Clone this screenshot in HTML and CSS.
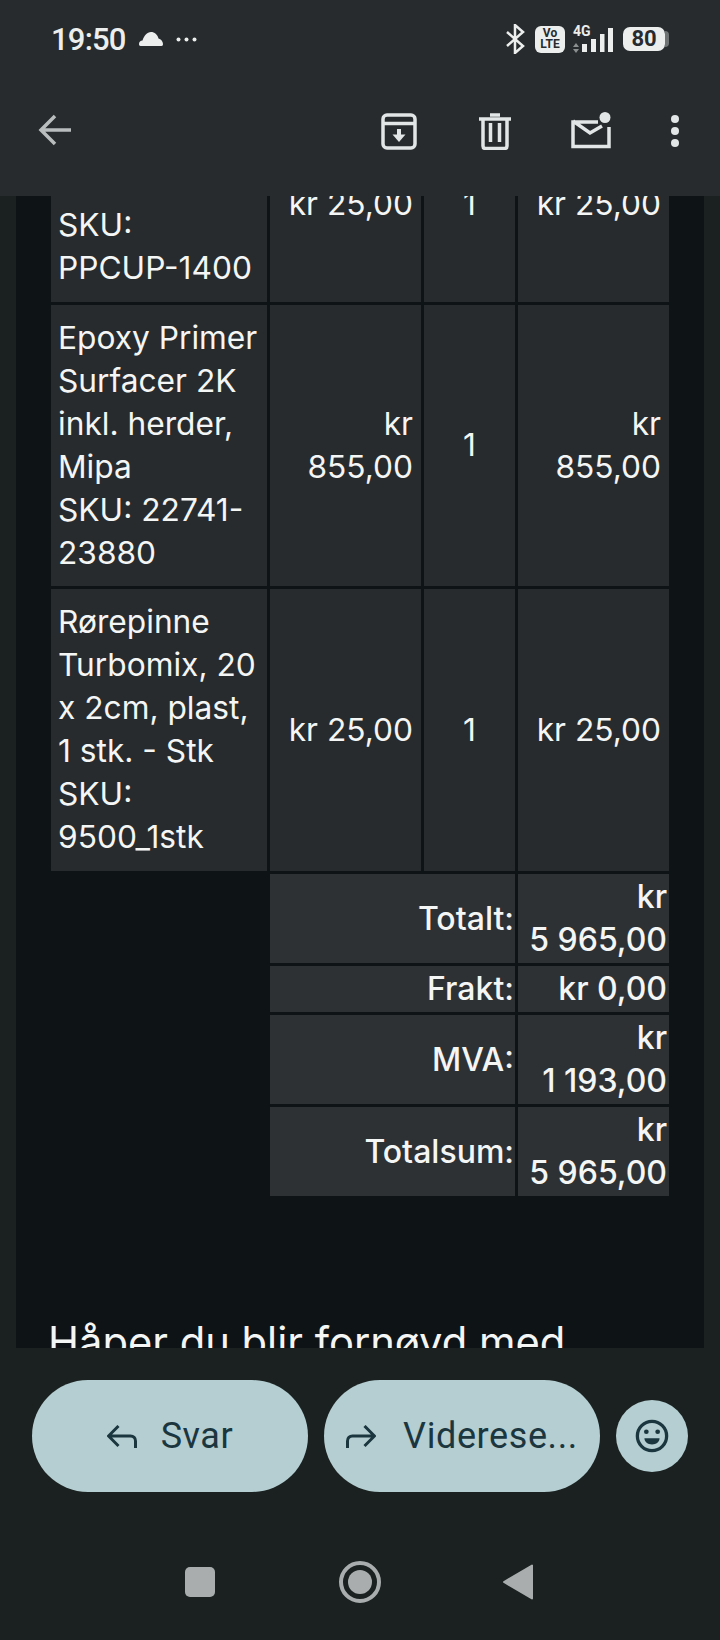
FILE: index.html
```html
<!DOCTYPE html>
<html lang="no">
<head>
    <meta charset="UTF-8">
    <meta name="viewport" content="width=device-width, initial-scale=1.0">
    <title>E-post</title>
    <link rel="stylesheet" href="styles.css">
</head>
<body>
    <div class="top">
        <div class="status-bar">
            <div class="status-left">
                <span class="clock">19:50</span>
                <svg class="cloud" viewBox="0 0 24 14"><path d="M1.500 14C.5 14 0 13 0 12c0-2 1.500-3.500 3.500-3.500C5 4 8 0 12 0c3.500 0 6.500 2.500 7.500 6.500 2.500.5 4.500 3 4.500 5.500 0 1-.5 2-1.500 2z" fill="#eceeee"/></svg>
                <svg class="dots" viewBox="0 0 21 5"><circle cx="2.500" cy="2.500" r="2" fill="#eceeee"/><circle cx="10.500" cy="2.500" r="2" fill="#eceeee"/><circle cx="18.500" cy="2.500" r="2" fill="#eceeee"/></svg>
            </div>
            <div class="status-right">
                <svg class="bluetooth" viewBox="0 0 20 30"><path d="M2 8l16 14-8 7V1l8 7L2 22" fill="none" stroke="#eceeee" stroke-width="2.500"/></svg>
                <span class="volte">Vo<br>LTE</span>
                <span class="signal">
                    <span class="net">4G</span>
                    <svg viewBox="0 0 40 27"><path d="M0 21l3-4 3 4zM0 23l3 4 3-4z" fill="#8b8f90"/><path d="M9 18h5v8H9zM18 13h5v13h-5zM27 8h4.500v18H27zM35 2h5v24h-5z" fill="#eceeee"/></svg>
                </span>
                <span class="battery"><span class="battery-level">80</span><span class="battery-tip"></span></span>
            </div>
        </div>
        <div class="toolbar">
            <svg class="icon-back" viewBox="0 0 34 32"><path d="M33 16H4M17 2L3 16l14 14" fill="none" stroke="#b9bdbe" stroke-width="3.500"/></svg>
            <div class="toolbar-actions">
                <svg class="icon-archive" viewBox="0 0 36 37"><rect x="2" y="2" width="32" height="33" rx="4" fill="none" stroke="#e3e6e6" stroke-width="3.500"/><path d="M2 10.500h32" stroke="#e3e6e6" stroke-width="3.500"/><path d="M18 16v7" stroke="#e3e6e6" stroke-width="4"/><path d="M11.500 21.500h13L18 29z" fill="#e3e6e6"/></svg>
                <svg class="icon-trash" viewBox="0 0 32 37"><path d="M0 6h32M11 2h10" fill="none" stroke="#e3e6e6" stroke-width="3.500"/><path d="M4 7v26c0 1.500 1 2.500 2.500 2.500h19c1.500 0 2.500-1 2.500-2.500V7M11.500 10v19M20.500 10v19" fill="none" stroke="#e3e6e6" stroke-width="3.500"/></svg>
                <svg class="icon-mail" viewBox="0 0 40 38"><path d="M27 10H2v24.500h36V15M2 9l17 12 12-7" fill="none" stroke="#e3e6e6" stroke-width="3.500"/><circle cx="34" cy="5.500" r="5.500" fill="#e3e6e6"/></svg>
                <svg class="icon-more" viewBox="0 0 10 32"><circle cx="5" cy="4" r="4" fill="#e3e6e6"/><circle cx="5" cy="16" r="4" fill="#e3e6e6"/><circle cx="5" cy="28" r="4" fill="#e3e6e6"/></svg>
            </div>
        </div>
    </div>

    <div class="message-view">
        <div class="message">
            <table class="order-table">
                <tbody>
                    <tr>
                        <td class="product">Målebeger<br>PP 1400 ml<br>SKU: <span class="sku">PPCUP-1400</span></td>
                        <td class="price">kr 25,00</td>
                        <td class="qty">1</td>
                        <td class="price">kr 25,00</td>
                    </tr>
                    <tr>
                        <td class="product">Epoxy Primer Surfacer 2K inkl. herder, Mipa<br>SKU: 22741-23880</td>
                        <td class="price">kr 855,00</td>
                        <td class="qty">1</td>
                        <td class="price">kr 855,00</td>
                    </tr>
                    <tr>
                        <td class="product">Rørepinne Turbomix, 20 x 2cm, plast, 1 stk. - Stk<br>SKU: 9500_1stk</td>
                        <td class="price">kr 25,00</td>
                        <td class="qty">1</td>
                        <td class="price">kr 25,00</td>
                    </tr>
                </tbody>
                <tfoot>
                    <tr>
                        <td class="blank"></td>
                        <th colspan="2">Totalt:</th>
                        <td class="sum">kr 5&nbsp;965,00</td>
                    </tr>
                    <tr>
                        <td class="blank"></td>
                        <th colspan="2">Frakt:</th>
                        <td class="sum">kr 0,00</td>
                    </tr>
                    <tr>
                        <td class="blank"></td>
                        <th colspan="2">MVA:</th>
                        <td class="sum">kr 1&nbsp;193,00</td>
                    </tr>
                    <tr>
                        <td class="blank"></td>
                        <th colspan="2">Totalsum:</th>
                        <td class="sum">kr 5&nbsp;965,00</td>
                    </tr>
                </tfoot>
            </table>
            <p class="closing">Håper du blir fornøyd med</p>
        </div>
    </div>

    <div class="bottom">
        <div class="actions">
            <button class="pill">
                <svg class="pill-icon" viewBox="0 0 30 23"><path d="M28.500 23v-7c0-3-2-5-5-5H2.500M11.500 1l-10 10 10 10" fill="none" stroke="#1c3640" stroke-width="3"/></svg>
                <span>Svar</span>
            </button>
            <button class="pill pill-forward">
                <svg class="pill-icon" viewBox="0 0 30 23"><path d="M1.500 23v-7c0-3 2-5 5-5h21M18.500 1l10 10-10 10" fill="none" stroke="#1c3640" stroke-width="3"/></svg>
                <span>Viderese...</span>
            </button>
            <button class="emoji-btn">
                <svg viewBox="0 0 36 36"><circle cx="18" cy="18" r="15.500" fill="none" stroke="#1c3640" stroke-width="3.500"/><circle cx="12" cy="13.500" r="2.500" fill="#1c3640"/><circle cx="24" cy="13.500" r="2.500" fill="#1c3640"/><path d="M10 20.500h16c0 4-3.500 6.500-8 6.500s-8-2.500-8-6.500z" fill="#1c3640"/></svg>
            </button>
        </div>
        <div class="nav-bar">
            <span class="nav-square"></span>
            <span class="nav-home"><span></span></span>
            <svg class="nav-back" viewBox="0 0 30 36"><path d="M29 1.500v33L1 18z" fill="#a9adae" stroke="#a9adae" stroke-width="2" stroke-linejoin="round"/></svg>
        </div>
    </div>
</body>
</html>
```

FILE: styles.css
```css
* {
    box-sizing: border-box;
    margin: 0;
    padding: 0;
}
body {
    width: 720px;
    height: 1640px;
    display: flex;
    flex-direction: column;
    overflow: hidden;
    background: #1a2120;
    font-family: Inter, Roboto, sans-serif;
    color: #f4f5f5;
}

/* top bars */
.top {
    height: 196px;
    background: #272b2d;
    padding: 0 40px 0 38px;
}
.status-bar {
    height: 80px;
    padding: 0 11px 2px 13px;
    display: flex;
    justify-content: space-between;
    align-items: center;
}
.status-left, .status-right {
    display: flex;
    align-items: center;
}
.clock {
    font-family: Roboto, sans-serif;
    font-size: 31px;
    font-weight: 500;
    letter-spacing: -.8px;
    color: #eceeee;
}
.cloud {
    width: 24px;
    height: 14px;
    margin-left: 13px;
}
.dots {
    width: 21px;
    height: 5px;
    margin-left: 13px;
}
.bluetooth {
    width: 20px;
    height: 30px;
}
.volte {
    width: 30px;
    height: 27px;
    margin-left: 10px;
    border-radius: 6px;
    background: #eceeee;
    color: #272b2d;
    font-family: Roboto, sans-serif;
    font-size: 12px;
    font-weight: 700;
    line-height: 11px;
    text-align: center;
    padding-top: 2px;
}
.signal {
    position: relative;
    width: 40px;
    height: 27px;
    margin-left: 8px;
}
.signal svg {
    display: block;
    width: 40px;
    height: 27px;
}
.net {
    position: absolute;
    left: 0;
    top: -1px;
    font-family: Roboto, sans-serif;
    font-size: 14px;
    font-weight: 700;
    line-height: 13px;
    color: #eceeee;
}
.battery {
    display: flex;
    align-items: center;
    margin-left: 10px;
}
.battery-level {
    width: 42px;
    height: 24px;
    border-radius: 7px;
    background: #eceeee;
    color: #272b2d;
    font-family: Roboto, sans-serif;
    font-size: 22px;
    font-weight: 700;
    line-height: 24px;
    text-align: center;
}
.battery-tip {
    width: 4px;
    height: 16px;
    border-radius: 0 4px 4px 0;
    background: #6f7374;
}
.toolbar {
    height: 100px;
    display: flex;
    justify-content: space-between;
    align-items: center;
}
.icon-back {
    width: 34px;
    height: 32px;
}
.toolbar-actions {
    display: flex;
    align-items: center;
    padding-top: 2px;
}
.icon-archive {
    width: 36px;
    height: 37px;
}
.icon-trash {
    width: 32px;
    height: 37px;
    margin-left: 62px;
}
.icon-mail {
    width: 40px;
    height: 38px;
    margin-left: 60px;
}
.icon-more {
    width: 10px;
    height: 32px;
    margin-left: 59px;
}

/* mail body, scrolled past the top of the order table */
.message-view {
    height: 1152px;
    padding: 0 16px;
    overflow: hidden;
}
.message {
    height: 100%;
    display: flow-root;
    background: #0e1315;
    padding: 0 30px;
}
.order-table {
    width: 624px;
    margin: -93px 0 0 2px;
    border-collapse: separate;
    border-spacing: 3px;
    table-layout: fixed;
    font-size: 31.700px;
    line-height: 43px;
}
.order-table td.product {
    width: 216px;
    padding: 11px 7px 12.500px;
    background: #282b2d;
}
.sku {
    white-space: nowrap;
}
.price {
    width: 151px;
    padding: 11px 8px 12.500px;
    text-align: right;
    background: #282b2d;
}
.qty {
    width: 91px;
    padding: 11px 8px 12.500px;
    text-align: center;
    background: #282b2d;
}
.blank {
    background: none;
}
.order-table th, .sum {
    padding: 1.500px 2px;
    text-align: right;
    font-size: 32px;
    font-weight: 500;
    background: #2e3134;
}
.order-table th {
    padding-right: 1px;
}
.closing {
    margin: 119px 0 0 2px;
    font-size: 41.700px;
    line-height: 48px;
}

/* reply buttons and system navigation */
.bottom {
    flex: 1;
}
.actions {
    display: flex;
    align-items: center;
    gap: 16px;
    padding: 32px 32px 0;
}
.pill {
    width: 276px;
    height: 112px;
    display: flex;
    align-items: center;
    justify-content: center;
    gap: 24px;
    border: none;
    border-radius: 56px;
    background: #b4ced1;
    color: #1c3640;
    font-family: Roboto, sans-serif;
    font-size: 36px;
    letter-spacing: .6px;
}
.pill-forward {
    gap: 27px;
}
.pill-icon {
    width: 30px;
    height: 23px;
}
.emoji-btn {
    width: 72px;
    height: 72px;
    display: flex;
    align-items: center;
    justify-content: center;
    border: none;
    border-radius: 50%;
    background: #b4ced1;
}
.emoji-btn svg {
    width: 34px;
    height: 34px;
}
.nav-bar {
    height: 148px;
    padding: 32px 2px 0 0;
    display: flex;
    align-items: center;
    justify-content: center;
}
.nav-square {
    width: 30px;
    height: 30px;
    border-radius: 5px;
    background: #a9adae;
    margin-right: 124px;
}
.nav-home {
    width: 42px;
    height: 42px;
    border: 4px solid #a9adae;
    border-radius: 50%;
    display: flex;
    align-items: center;
    justify-content: center;
    margin-right: 122px;
}
.nav-home span {
    width: 24px;
    height: 24px;
    border-radius: 50%;
    background: #a9adae;
}
.nav-back {
    width: 30px;
    height: 36px;
}
```
